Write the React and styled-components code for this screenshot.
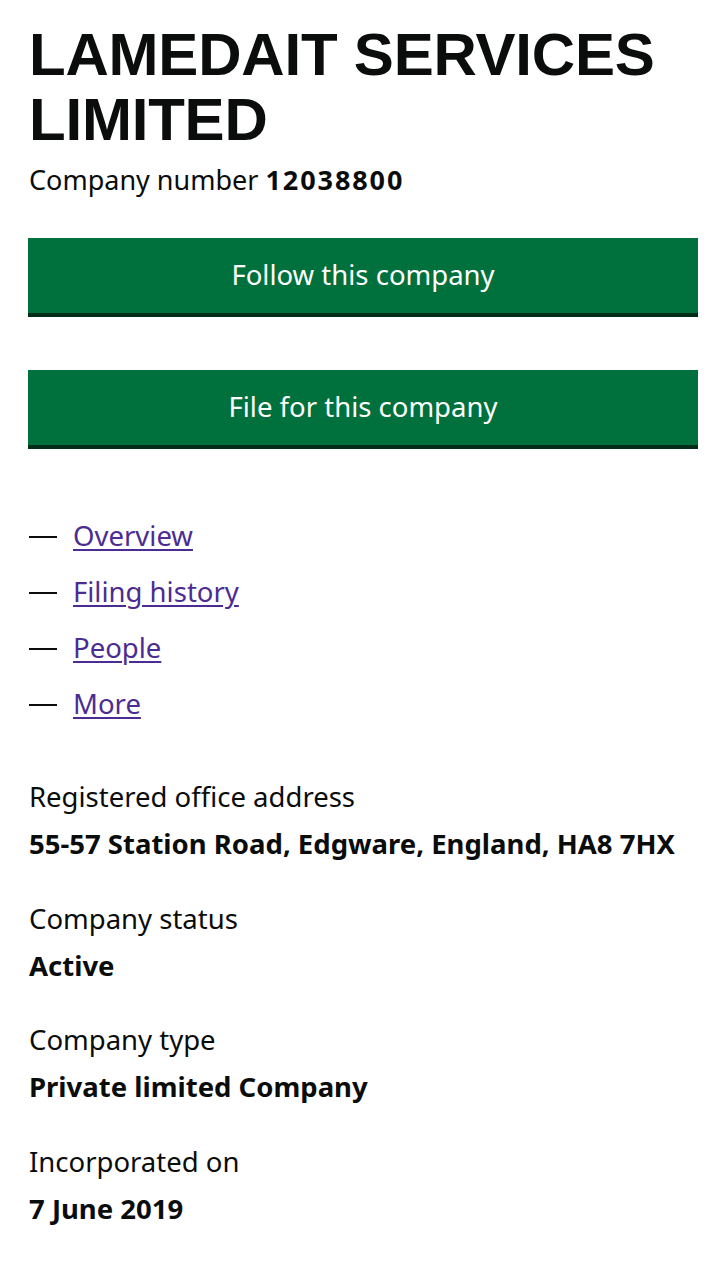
import React from "react";
import styled, { createGlobalStyle } from "styled-components";

const Global = createGlobalStyle`
  html, body { margin: 0; padding: 0; background: #ffffff; }
  body { font-family: "Noto Sans", "Open Sans", sans-serif; color: #0b0c0c; }
`;

const Page = styled.main`
  padding: 22px 29px 40px 29px;
  display: flex;
  flex-direction: column;
`;

const Heading = styled.h1`
  margin: 0;
  font-family: "Liberation Sans", Arial, sans-serif;
  font-weight: 700;
  font-size: 60px;
  line-height: 65px;
  letter-spacing: -0.2px;
  color: #0b0c0c;
`;

const CompanyNumber = styled.p`
  margin: 10px 0 0 0;
  font-size: 27px;
  line-height: 36px;
`;

const Number = styled.strong`
  font-weight: 700;
  letter-spacing: 1.9px;
`;

const Actions = styled.div`
  display: flex;
  flex-direction: column;
  gap: 57px;
  margin-top: 40px;
`;

const Button = styled.button`
  display: block;
  width: 670px;
  margin-left: -1px;
  height: 75px;
  border: 0;
  background: #00703c;
  box-shadow: 0 4px 0 #002d18;
  color: #ffffff;
  font-family: "Noto Sans", sans-serif;
  font-size: 27.5px;
  cursor: pointer;
  padding: 0 0 2px 0;
`;

const Nav = styled.ul`
  list-style: none;
  margin: 73px 0 0 0;
  padding: 0;
  display: flex;
  flex-direction: column;
  gap: 20px;
`;

const NavItem = styled.li`
  display: flex;
  align-items: center;
  gap: 16px;
  font-size: 27.5px;
  line-height: 36px;
  &::before {
    content: "";
    display: block;
    width: 28px;
    height: 2px;
    margin-top: 2px;
    background: #0b0c0c;
  }
`;

const NavLink = styled.a`
  color: #4c2c92;
  text-decoration: underline;
  text-decoration-thickness: 2px;
  text-underline-offset: 3px;
`;

const Details = styled.dl`
  margin: 57px 0 0 0;
  display: flex;
  flex-direction: column;
  gap: 38.5px;
`;

const Group = styled.div`
  display: flex;
  flex-direction: column;
  gap: 11px;
`;

const Label = styled.dt`
  font-size: 27.5px;
  line-height: 36px;
`;

const Value = styled.dd`
  margin: 0;
  font-size: 27.5px;
  line-height: 36px;
  font-weight: 700;
`;

const details = [
  ["Registered office address", "55-57 Station Road, Edgware, England, HA8 7HX"],
  ["Company status", "Active"],
  ["Company type", "Private limited Company"],
  ["Incorporated on", "7 June 2019"],
];

export default function App() {
  return (
    <>
      <Global />
      <Page>
        <Heading>LAMEDAIT SERVICES LIMITED</Heading>
        <CompanyNumber>
          Company number <Number>12038800</Number>
        </CompanyNumber>
        <Actions>
          <Button>Follow this company</Button>
          <Button>File for this company</Button>
        </Actions>
        <Nav>
          {["Overview", "Filing history", "People", "More"].map((n) => (
            <NavItem key={n}>
              <NavLink href="#">{n}</NavLink>
            </NavItem>
          ))}
        </Nav>
        <Details>
          {details.map(([l, v]) => (
            <Group key={l}>
              <Label>{l}</Label>
              <Value>{v}</Value>
            </Group>
          ))}
        </Details>
      </Page>
    </>
  );
}
